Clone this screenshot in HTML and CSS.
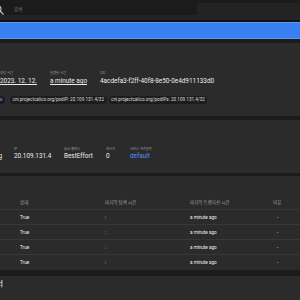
FILE: index.html
```html
<!DOCTYPE html>
<html lang="ko">
<head>
<meta charset="utf-8">
<link rel="stylesheet" href="styles.css">
</head>
<body>
<div class="topbar">
  <div class="search">
    <span class="stub icon-stub">
      <svg class="search-icon" width="10" height="10" viewBox="0 0 10 10"><circle cx="4" cy="4" r="3" fill="none" stroke="#cfcfcf" stroke-width="1.1"/><line x1="6.2" y1="6.2" x2="9.2" y2="9.2" stroke="#cfcfcf" stroke-width="1.2" stroke-linecap="round"/></svg>
    </span>
    <span class="placeholder">검색</span>
  </div>
</div>
<div class="toolbar"></div>

<section class="card meta">
  <div class="fields">
    <div class="field w50"><div class="label">생성 시간</div><div class="value u">2023. 12. 12.</div></div>
    <div class="field w50"><div class="label">실행된 시간</div><div class="value u">a minute ago</div></div>
    <div class="field"><div class="label">UID</div><div class="value">4acdefa3-f2ff-40f8-8e50-0e4d911133d0</div></div>
  </div>
  <div class="chips">
    <span class="stub chip-stub"><span class="chip chip-blue">k8s-app: calico-node</span></span>
    <span class="chip">cni.projectcalico.org/podIP: 20.109.131.4/32</span>
    <span class="chip">cni.projectcalico.org/podIPs: 20.109.131.4/32</span>
  </div>
</section>

<section class="card res">
  <div class="fields">
    <div class="field stub field-stub"><div class="stub-inner"><div class="label">상태</div><div class="value tight">Running</div></div></div>
    <div class="field ip"><div class="label">IP</div><div class="value tight">20.109.131.4</div></div>
    <div class="field qos"><div class="label">QoS 클래스</div><div class="value tight">BestEffort</div></div>
    <div class="field restarts"><div class="label">재시작</div><div class="value tight">0</div></div>
    <div class="field"><div class="label">서비스 어카운트</div><div class="value tight link">default</div></div>
  </div>
</section>

<section class="card cond">
  <div class="table">
    <div class="row head"><span></span><span>상태</span><span>마지막 탐색 시간</span><span>마지막 트랜지션 시간</span><span>이유</span></div>
    <div class="row"><span></span><span>True</span><span>:</span><span>a minute ago</span><span class="dash">-</span></div>
    <div class="row"><span></span><span>True</span><span>:</span><span>a minute ago</span><span class="dash">-</span></div>
    <div class="row"><span></span><span>True</span><span>:</span><span>a minute ago</span><span class="dash">-</span></div>
    <div class="row"><span></span><span>True</span><span>:</span><span>a minute ago</span><span class="dash">-</span></div>
  </div>
</section>

<section class="card last">
  <div class="stub title-stub"><span class="title">컨테이너</span></div>
  <div class="empty">여기에 표시할 항목이 없습니다.</div>
</section>
</body>
</html>
```

FILE: styles.css
```css
html, body {
  margin: 0;
  padding: 0;
}
body {
  width: 300px;
  height: 300px;
  overflow: hidden;
  background: #1c1c1c;
  font-family: Roboto, "Noto Sans CJK KR", sans-serif;
  color: #e6e6e6;
}

.stub {
  display: flex;
  justify-content: flex-end;
  flex-shrink: 0;
}
.stub > * {
  flex-shrink: 0;
  white-space: nowrap;
}

.topbar {
  height: 17px;
  background: #232323;
  border-bottom: 2px solid #121212;
}
.search {
  margin-top: 3px;
  width: 197px;
  height: 12px;
  background: #1b1b1b;
  display: flex;
  align-items: center;
}
.icon-stub {
  width: 4px;
  align-items: center;
}
.search-icon {
  display: block;
  margin-top: 1px;
}
.placeholder {
  margin-left: 10px;
  font-size: 4.5px;
  color: #7a7a7a;
}

.toolbar {
  height: 17px;
  box-sizing: border-box;
  background: #3a7ff0;
  border-top: 1px solid #5b97f4;
  border-bottom: 1px solid #5b97f4;
  margin-bottom: 4px;
}

.card {
  background: #2b2b2b;
  box-sizing: border-box;
}

.meta {
  height: 73px;
  padding-top: 28px;
  margin-bottom: 4px;
}
.fields {
  display: flex;
}
.field {
  flex-shrink: 0;
}
.label {
  font-size: 3.3px;
  line-height: 4px;
  height: 4px;
  color: #9a9a9a;
  white-space: nowrap;
}
.value {
  font-size: 6.4px;
  line-height: 7px;
  margin-top: 3px;
  white-space: nowrap;
  color: #ececec;
}
.value.tight {
  margin-top: 2px;
}
.u {
  text-decoration: underline;
  text-underline-offset: 1px;
  text-decoration-thickness: 0.5px;
}
.link {
  color: #4d8ff2;
}
.w50 {
  width: 50px;
}

.chips {
  display: flex;
  gap: 2px;
  margin-top: 11px;
}
.chip {
  height: 8px;
  line-height: 8px;
  padding: 0 2.5px;
  border-radius: 4px;
  background: #1c1c1c;
  font-size: 4.6px;
  white-space: nowrap;
  flex-shrink: 0;
  color: #dcdcdc;
}
.chip-stub {
  width: 5px;
  margin-right: 3px;
}
.chip-blue {
  color: #5b8ff0;
}

.res {
  height: 53px;
  padding-top: 27px;
  margin-bottom: 3px;
}
.field-stub {
  width: 2px;
}
.stub-inner {
  display: flex;
  flex-direction: column;
  align-items: flex-start;
}
.ip {
  margin-left: 12px;
  width: 50px;
}
.qos {
  width: 42px;
}
.restarts {
  width: 24px;
}

.cond {
  height: 94px;
  padding-top: 18px;
  margin-bottom: 6px;
}
.row {
  display: grid;
  grid-template-columns: 20px 85px 85px 83px 1fr;
  height: 15px;
  box-sizing: border-box;
  align-items: center;
  font-size: 4.6px;
  color: #f0f0f0;
  white-space: nowrap;
}
.row + .row {
  border-top: 1px solid #383838;
}
.row.head {
  color: #a0a0a0;
  font-size: 4.5px;
}
.dash {
  padding-left: 4px;
}

.last {
  height: 40px;
  padding-top: 4px;
}
.title-stub {
  width: 3px;
}
.title {
  font-size: 7px;
  line-height: 9px;
  font-weight: 500;
  color: #e6e6e6;
}
.empty {
  margin-top: 12px;
  margin-left: 158px;
  font-size: 5.5px;
  line-height: 7px;
  color: #cfcfcf;
  white-space: nowrap;
}
```
